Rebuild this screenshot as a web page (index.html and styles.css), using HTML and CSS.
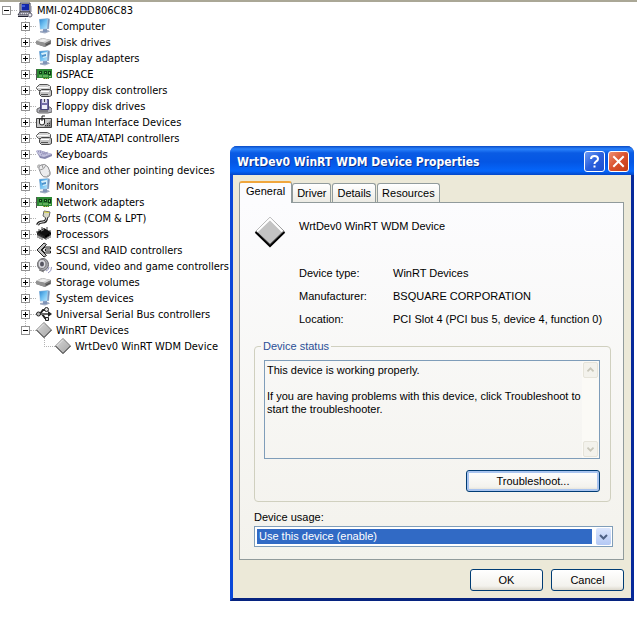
FILE: index.html
```html
<!DOCTYPE html>
<html lang="en">
<head>
<meta charset="utf-8">
<title>Device Manager</title>
<link rel="stylesheet" href="styles.css">
</head>
<body>
<svg class="defs" aria-hidden="true">
  <defs>
    <linearGradient id="screen" x1="0" y1="0" x2="1" y2="1"><stop offset="0" stop-color="#2f86cf"/><stop offset=".5" stop-color="#6fc0f2"/><stop offset="1" stop-color="#b9e6fb"/></linearGradient>
    <linearGradient id="metal" x1="0" y1="0" x2="1" y2="1"><stop offset="0" stop-color="#d8d8d8"/><stop offset="1" stop-color="#a4a4a4"/></linearGradient>
  </defs>
  <symbol id="i-root" viewBox="0 0 16 16">
    <path d="M3 1h10v9H3z" fill="#d4d0c8" stroke="#334" /><path d="M4.500 2h7.500v6.500h-7.500z" fill="#1226a8"/><path d="M5 3h3v2H5z" fill="#3c58d8"/>
    <path d="M1 13l2-3h10l1 3z" fill="#dcdce4" stroke="#334"/><path d="M3 12h8" stroke="#556" stroke-dasharray="1 1"/><path d="M1 14.500h10" stroke="#223"/>
    <circle cx="13" cy="13" r="2" fill="#e8e8ee" stroke="#667"/><path d="M14 10v-6" stroke="#889"/>
  </symbol>
  <symbol id="i-monitor" viewBox="0 0 16 16">
    <path d="M4 13l8-1 2 1.500-5 2-5-1z" fill="#9fabc2"/><path d="M7 10h4v4H7z" fill="#7f94b8"/>
    <path d="M3 1l9-1 2 1-1 10-9 .5z" fill="#a9c3de"/><path d="M3.500 1.500l8-.7-.5 9.700-6.500.5z" fill="url(#screen)"/><path d="M12 1l1.500.5-1 9-1 .5z" fill="#7894b9"/>
  </symbol>
  <symbol id="i-display" viewBox="0 0 16 16">
    <use href="#i-monitor"/><path d="M5 3l6-1v5l-4 1z" fill="#d7effa"/><path d="M6 5l4-1v2l-4 1z" fill="#4c91ca"/>
  </symbol>
  <symbol id="i-disk" viewBox="0 0 16 16">
    <path d="M0 7l6-3 9 2v4l-6 3-9-3z" fill="#777"/><path d="M0 7l6-3 9 2-6 3z" fill="#d6d6d6"/><path d="M0 7l9 2v4l-9-3z" fill="#929292"/><path d="M3 7l4-2 4 1-4 2z" fill="#efefef"/><path d="M10 11l4-2" stroke="#444"/>
  </symbol>
  <symbol id="i-card" viewBox="0 0 16 16">
    <path d="M.5 3v11" stroke="#555"/><path d="M1 3h15v9h-3v1H7v-1H1z" fill="#2d8a35"/><path d="M3 5h3v3H3zM8 5h3v3H8zM12 5h3v4h-3z" fill="#113f18"/><path d="M4 6h1v1H4zM9 6h1v1H9zM13 6h1v2h-1z" fill="#6cc562"/><path d="M3 10h3M7 10h5M13 10.500h2" stroke="#9ad486"/><path d="M7 12.500h6" stroke="#c4b24b" stroke-dasharray="1 1"/>
  </symbol>
  <symbol id="i-ctrl" viewBox="0 0 16 16">
    <path d="M3.500 2.500h8l3 2v3l-2 1h-10l-2-2v-1z" fill="#d0d0d0" stroke="#555"/><path d="M1 5.500h10l3-1" stroke="#fff" fill="none"/>
    <path d="M5.500 7.500h8l2 1v5l-2 1h-8l-2-2v-3z" fill="#c4c4c4" stroke="#444"/><path d="M5 9.500h8" stroke="#fff"/><path d="M5 12.500h7" stroke="#555"/>
  </symbol>
  <symbol id="i-floppy" viewBox="0 0 16 16">
    <path d="M1 11l4-2h9l2 2v3l-4 1H3l-2-1z" fill="#b4b4be" stroke="#666"/><path d="M4.500 1.500h8v10h-8z" fill="#756fa9" stroke="#484577"/><path d="M6 1h5v4H6z" fill="#d9d8ed"/><path d="M8.500 1v3" stroke="#444"/><path d="M6 7h5v4H6z" fill="#eeeef8"/><path d="M3 13h9" stroke="#444"/>
  </symbol>
  <symbol id="i-hid" viewBox="0 0 16 16">
    <path d="M.5 4.500h15v9H.5z" fill="#c7c7c7" stroke="#444"/><path d="M8 13l7-7v7z" fill="#888"/><path d="M9 11.500h5M11 9.500h3" stroke="#333" stroke-dasharray="1 1"/><path d="M3.500 5v4q0 2 2.500 2t2.500-2V5z" fill="#fff" stroke="#222"/><path d="M6 7V2h3" fill="none" stroke="#222"/>
  </symbol>
  <symbol id="i-keyboard" viewBox="0 0 16 16">
    <path d="M0 5l3-1 13 4v2l-7 3-5-1z" fill="#8787ad"/><path d="M0 5l3-1 13 4-8 3-4-1z" fill="#c3c2de"/><path d="M2 5.500l8 3M4 5l8 3M5 9l7-3" stroke="#8582ad" stroke-dasharray="1 1"/>
  </symbol>
  <symbol id="i-mouse" viewBox="0 0 16 16">
    <path d="M5 4Q1 1 2 6" fill="none" stroke="#999"/><path d="M5 3q4-2 7 2l2 5q1 4-3 5-4 1-6-3L3 7q-1-3 2-4z" fill="#ececee" stroke="#8b8b8f"/><path d="M4 8q4 0 6-5M7 6l-1-3" fill="none" stroke="#999"/><path d="M13 9q2 4-2 5" fill="none" stroke="#aaa"/>
  </symbol>
  <symbol id="i-port" viewBox="0 0 16 16">
    <path d="M8 1l6 1-1 5-3 1-3-2z" fill="#d6d6c4" stroke="#666"/><path d="M8 2l5 .5" stroke="#d8d23a"/><path d="M10.500 8q0 4-4 4-4 0-5 3" fill="none" stroke="#222" stroke-width="3"/><path d="M10.500 7q0 5-4 5-4 0-5 3" fill="none" stroke="#ddd"/>
  </symbol>
  <symbol id="i-cpu" viewBox="0 0 16 16">
    <path d="M1 6l7-4 7 4-6 6z" fill="#111"/><path d="M1 6l8 4v3L1 9z" fill="#222"/><path d="M9 10l6-4v3l-6 4z" fill="#000"/><path d="M3 3v2M6 1v2M11 1v3M14 4v2M2 8v4M4 9v4M6 10v4M10 11v3M12 10v3M14 8v4M0 6h2" stroke="#444"/><path d="M5 5l3-1.500" stroke="#999"/>
  </symbol>
  <symbol id="i-scsi" viewBox="0 0 16 16">
    <path d="M10.500 2.500L8 1 1 8l7 7 2.500-1.500L5 8z" fill="#c4c4c4" stroke="#222"/><path d="M6 8l3-3h5.500v2H9.500v2h5v2H9z" fill="#ddd" stroke="#222"/>
  </symbol>
  <symbol id="i-sound" viewBox="0 0 16 16">
    <ellipse cx="7" cy="6.500" rx="5.500" ry="6" fill="#a5a5ac" stroke="#66666c"/><ellipse cx="6" cy="6" rx="4" ry="4.500" fill="#dcdce2" stroke="#777"/><ellipse cx="6" cy="6" rx="2" ry="2.500" fill="#555560"/><path d="M10 13q3-1 3-4M12 15q4-2 3.500-6" fill="none" stroke="#9697c0"/><path d="M3 12l5 2" stroke="#777"/>
  </symbol>
  <symbol id="i-usb" viewBox="0 0 16 16">
    <path d="M2 8h11M4 8l3-4h3M6 8l3 4h2" fill="none" stroke="#222" stroke-width="2"/><path d="M3 8h9" stroke="#aaa"/><circle cx="2.500" cy="8" r="2" fill="#bbb" stroke="#222"/><path d="M12 5l4 3-4 3z" fill="#222"/><circle cx="10.500" cy="3.500" r="2" fill="#ddd" stroke="#222"/><path d="M9.500 11.500h3v3h-3z" fill="#ddd" stroke="#222"/>
  </symbol>
  <symbol id="i-diamond" viewBox="0 0 16 16">
    <path d="M8 .5L15.500 8 8 15.500.5 8z" fill="url(#metal)" stroke="#777"/><path d="M.5 8L8 15.500 15.500 8" fill="none" stroke="#444"/><path d="M1.500 8L8 1.500" stroke="#eee"/>
  </symbol>
</svg>

<main class="desktop">
  <nav class="tree" aria-label="Devices">
    <div class="row root"><button class="toggle" aria-label="Collapse"></button><i class="link"></i><svg class="icon"><use href="#i-root"/></svg><span>MMI-024DD806C83</span></div>
    <ul class="branch">
      <li class="row"><button class="toggle plus" aria-label="Expand"></button><i class="link"></i><svg class="icon"><use href="#i-monitor"/></svg><span>Computer</span></li>
      <li class="row"><button class="toggle plus" aria-label="Expand"></button><i class="link"></i><svg class="icon"><use href="#i-disk"/></svg><span>Disk drives</span></li>
      <li class="row"><button class="toggle plus" aria-label="Expand"></button><i class="link"></i><svg class="icon"><use href="#i-display"/></svg><span>Display adapters</span></li>
      <li class="row"><button class="toggle plus" aria-label="Expand"></button><i class="link"></i><svg class="icon"><use href="#i-card"/></svg><span>dSPACE</span></li>
      <li class="row"><button class="toggle plus" aria-label="Expand"></button><i class="link"></i><svg class="icon"><use href="#i-ctrl"/></svg><span>Floppy disk controllers</span></li>
      <li class="row"><button class="toggle plus" aria-label="Expand"></button><i class="link"></i><svg class="icon"><use href="#i-floppy"/></svg><span>Floppy disk drives</span></li>
      <li class="row"><button class="toggle plus" aria-label="Expand"></button><i class="link"></i><svg class="icon"><use href="#i-hid"/></svg><span>Human Interface Devices</span></li>
      <li class="row"><button class="toggle plus" aria-label="Expand"></button><i class="link"></i><svg class="icon"><use href="#i-ctrl"/></svg><span>IDE ATA/ATAPI controllers</span></li>
      <li class="row"><button class="toggle plus" aria-label="Expand"></button><i class="link"></i><svg class="icon"><use href="#i-keyboard"/></svg><span>Keyboards</span></li>
      <li class="row"><button class="toggle plus" aria-label="Expand"></button><i class="link"></i><svg class="icon"><use href="#i-mouse"/></svg><span>Mice and other pointing devices</span></li>
      <li class="row"><button class="toggle plus" aria-label="Expand"></button><i class="link"></i><svg class="icon"><use href="#i-display"/></svg><span>Monitors</span></li>
      <li class="row"><button class="toggle plus" aria-label="Expand"></button><i class="link"></i><svg class="icon"><use href="#i-card"/></svg><span>Network adapters</span></li>
      <li class="row"><button class="toggle plus" aria-label="Expand"></button><i class="link"></i><svg class="icon"><use href="#i-port"/></svg><span>Ports (COM &amp; LPT)</span></li>
      <li class="row"><button class="toggle plus" aria-label="Expand"></button><i class="link"></i><svg class="icon"><use href="#i-cpu"/></svg><span>Processors</span></li>
      <li class="row"><button class="toggle plus" aria-label="Expand"></button><i class="link"></i><svg class="icon"><use href="#i-scsi"/></svg><span>SCSI and RAID controllers</span></li>
      <li class="row"><button class="toggle plus" aria-label="Expand"></button><i class="link"></i><svg class="icon"><use href="#i-sound"/></svg><span>Sound, video and game controllers</span></li>
      <li class="row"><button class="toggle plus" aria-label="Expand"></button><i class="link"></i><svg class="icon"><use href="#i-disk"/></svg><span>Storage volumes</span></li>
      <li class="row"><button class="toggle plus" aria-label="Expand"></button><i class="link"></i><svg class="icon"><use href="#i-monitor"/></svg><span>System devices</span></li>
      <li class="row"><button class="toggle plus" aria-label="Expand"></button><i class="link"></i><svg class="icon"><use href="#i-usb"/></svg><span>Universal Serial Bus controllers</span></li>
      <li class="row"><button class="toggle" aria-label="Collapse"></button><i class="link"></i><svg class="icon"><use href="#i-diamond"/></svg><span>WinRT Devices</span></li>
    </ul>
    <div class="row leaf"><i class="link corner"></i><svg class="icon"><use href="#i-diamond"/></svg><span>WrtDev0 WinRT WDM Device</span></div>
  </nav>

  <section class="dialog" role="dialog" aria-labelledby="title">
    <header class="titlebar">
      <h1 id="title">WrtDev0 WinRT WDM Device Properties</h1>
      <button class="cap help" aria-label="Help"><svg viewBox="0 0 19 19"><path d="M6 7q0-3 3.500-3T13 7q0 1.500-2 2.500-1.500 1-1.500 2.500M9.500 13.500v2" fill="none" stroke="#fff" stroke-width="2"/></svg></button>
      <button class="cap close" aria-label="Close"><svg viewBox="0 0 19 19"><path d="M5 5l9 9M14 5l-9 9" stroke="#fff" stroke-width="2" stroke-linecap="square"/></svg></button>
    </header>
    <div class="body">
      <div class="tabs" role="tablist">
        <button class="tab active" role="tab" aria-selected="true">General</button>
        <button class="tab" role="tab">Driver</button>
        <button class="tab" role="tab">Details</button>
        <button class="tab" role="tab">Resources</button>
      </div>
      <div class="panel" role="tabpanel">
        <div class="device">
          <svg class="big" viewBox="0 0 32 32"><path d="M16 1.500L30.500 15.500 16 30 1.500 15.500z" fill="#c3c3c3"/><path d="M1.500 15.500L16 1.500l14.500 14" fill="none" stroke="#8c8c8c"/><path d="M3 15.500l13-12.500 12.500 12.500" fill="none" stroke="#fff" stroke-width="2"/><path d="M4 17l12 11 12.500-12" fill="none" stroke="#777"/><path d="M1.500 16L16 30l14.500-14" fill="none" stroke="#000" stroke-width="2"/></svg>
          <span>WrtDev0 WinRT WDM Device</span>
        </div>
        <dl class="facts">
          <dt>Device type:</dt><dd>WinRT Devices</dd>
          <dt>Manufacturer:</dt><dd>BSQUARE CORPORATION</dd>
          <dt>Location:</dt><dd>PCI Slot 4 (PCI bus 5, device 4, function 0)</dd>
        </dl>
        <fieldset class="status">
          <legend>Device status</legend>
          <div class="message">
            <textarea readonly aria-label="Device status">This device is working properly.

If you are having problems with this device, click Troubleshoot to start the troubleshooter.</textarea>
            <div class="scroll" aria-hidden="true">
              <svg viewBox="0 0 15 15"><path d="M4 9l3.500-3.500L11 9" fill="none" stroke="#c9c7ba" stroke-width="2"/></svg>
              <svg viewBox="0 0 15 15"><path d="M4 6l3.500 3.500L11 6" fill="none" stroke="#c9c7ba" stroke-width="2"/></svg>
            </div>
          </div>
          <button class="btn default">Troubleshoot...</button>
        </fieldset>
        <label class="usage" for="usage">Device usage:</label>
        <div class="combo">
          <select id="usage"><option>Use this device (enable)</option></select>
          <svg viewBox="0 0 15 17"><path d="M4 7l3.500 3.500L11 7" fill="none" stroke="#4d6185" stroke-width="2"/></svg>
        </div>
      </div>
      <footer class="actions">
        <button class="btn">OK</button>
        <button class="btn">Cancel</button>
      </footer>
    </div>
  </section>
</main>
</body>
</html>
```
FILE: styles.css
```css
* { box-sizing: border-box; }

body {
  margin: 0;
  background: #fff;
  color: #000;
  font: 11px/13px "Liberation Sans", Arial, sans-serif;
}

button, select, textarea { font: inherit; color: inherit; margin: 0; }

.defs { position: absolute; width: 0; height: 0; }

.desktop {
  display: grid;
  grid-template-columns: 230px minmax(0, 1fr);
  align-items: start;
  min-height: 100vh;
  padding-right: 3px;
  border-top: 2px solid #aaa796;
}

/* Device tree */
.tree {
  font-family: "DejaVu Sans Condensed", Tahoma, sans-serif;
  white-space: nowrap;
}

.branch {
  position: relative;
  margin: 0;
  padding: 0;
  list-style: none;
}

.branch::before {
  content: "";
  position: absolute;
  left: 25px;
  top: 0;
  bottom: 8px;
  border-left: 1px dotted #b4b4b4;
}

.row {
  display: flex;
  align-items: center;
  height: 16px;
  padding-left: 21px;
}

.row.root { padding-left: 2px; }
.row.leaf { padding-left: 44px; }
.row > span { margin-left: 4px; }

.toggle {
  position: relative;
  flex: none;
  width: 9px;
  height: 9px;
  padding: 0;
  border: 1px solid #919191;
  background: linear-gradient(#000, #000) center / 5px 1px no-repeat #fff;
}

.toggle.plus {
  background:
    linear-gradient(#000, #000) center / 5px 1px no-repeat,
    linear-gradient(#000, #000) center / 1px 5px no-repeat,
    #fff;
}

.link { flex: none; width: 6px; border-top: 1px dotted #b4b4b4; }

.link.corner {
  align-self: flex-start;
  width: 11px;
  height: 9px;
  border-top: 0;
  border-left: 1px dotted #b4b4b4;
  border-bottom: 1px dotted #b4b4b4;
}

.icon { flex: none; width: 16px; height: 16px; }

/* Dialog */
.dialog {
  margin-top: 144px;
  border: solid;
  border-width: 0 3px 3px;
  border-color: #0a48d8 #06299a #06237f #0a48d8;
  border-radius: 7px 7px 0 0;
  background: #0855dd;
}

.titlebar {
  display: flex;
  align-items: center;
  gap: 3px;
  height: 29px;
  margin: 0 -3px;
  padding: 2px 5px 0 7px;
  border-radius: 7px 7px 0 0;
  background: linear-gradient(#0a4bc6, #2a82fb 3px, #0a5be4 7px, #0456e4 16px, #0566fb 25px, #0447c8);
}

.titlebar h1 {
  flex: 1;
  margin: 0;
  color: #fff;
  font: bold 12px/14px "DejaVu Sans Condensed", Tahoma, sans-serif;
  text-shadow: 1px 1px #0a318f;
  white-space: nowrap;
}

.cap {
  width: 21px;
  height: 21px;
  padding: 0;
  border: 1px solid #fff;
  border-radius: 3px;
}

.cap svg { display: block; width: 19px; height: 19px; }
.help { background: linear-gradient(135deg, #6c9bf5, #2a5fdc 50%, #1c4fd0); }
.close { background: linear-gradient(135deg, #ee8f72, #d9502c 50%, #c33c14); }

.body {
  padding: 6px 7px 7px 6px;
  background: #ece9d8;
}

.tabs { display: flex; align-items: flex-end; gap: 1px; height: 21px; }

.tab {
  height: 19px;
  padding: 0 4px;
  border: 1px solid #919b9c;
  border-bottom: 0;
  border-radius: 3px 3px 0 0;
  background: linear-gradient(#fff, #ecebe4);
}

.tab.active {
  z-index: 1;
  height: 22px;
  margin: 0 -1px -1px 0;
  padding: 0 6px 3px;
  border-top: 2px solid #f0a63c;
  background: #fcfcfe;
}

.panel {
  padding: 13px 10px 12px 14px;
  border: 1px solid #919b9c;
  background: linear-gradient(#fcfcfe, #f3f2ec);
}

.device { display: flex; gap: 13px; }
.big { flex: none; width: 32px; height: 32px; }
.device span { padding-top: 4px; }

.facts {
  display: grid;
  grid-template-columns: 94px 1fr;
  row-gap: 10px;
  margin: 19px 0 14px 45px;
}

.facts dd { margin: 0; }

.status {
  display: flex;
  flex-direction: column;
  align-items: flex-end;
  min-width: 0;
  margin: 0 2px 0 0;
  padding: 7px 10px 9px 9px;
  border: 1px solid #d0d0bf;
  border-radius: 4px;
}

.status legend { padding: 0 2px; margin-left: -3px; color: #2a4f96; }

.message {
  display: flex;
  width: 100%;
  height: 99px;
  border: 1px solid #7f9db9;
}

.message textarea {
  flex: 1;
  min-width: 0;
  padding: 3px 0 3px 2px;
  border: 0;
  outline: 0;
  background: none;
  resize: none;
  overflow: hidden;
}

.scroll {
  display: flex;
  flex-direction: column;
  justify-content: space-between;
  width: 17px;
  padding: 1px;
  background: #fbfaf6;
}

.scroll svg {
  width: 15px;
  height: 16px;
  border: 1px solid #e6e4da;
  border-radius: 2px;
  background: #f3f2ec;
}

.btn {
  width: 73px;
  height: 22px;
  padding: 0;
  border: 1px solid #003c74;
  border-radius: 3px;
  background: linear-gradient(#fff, #f3f2ed 80%, #dcd8cc);
}

.btn.default {
  width: 134px;
  margin-top: 11px;
  box-shadow: inset 0 0 0 2px #a9c4ef;
}

.usage { display: block; margin: 9px 0 2px; }

.combo {
  display: flex;
  gap: 3px;
  height: 21px;
  padding: 1px;
  border: 1px solid #7f9db9;
  background: #fff;
}

.combo select {
  flex: 1;
  min-width: 0;
  margin: 1px;
  padding: 0 2px;
  border: 0;
  border-radius: 0;
  outline: 0;
  appearance: none;
  background: #316ac5;
  color: #fff;
}

.combo svg {
  width: 15px;
  height: 17px;
  border-radius: 2px;
  background: linear-gradient(#dbe6fd, #b4c8f4);
}

.actions {
  display: flex;
  justify-content: flex-end;
  gap: 8px;
  margin-top: 9px;
}
```
